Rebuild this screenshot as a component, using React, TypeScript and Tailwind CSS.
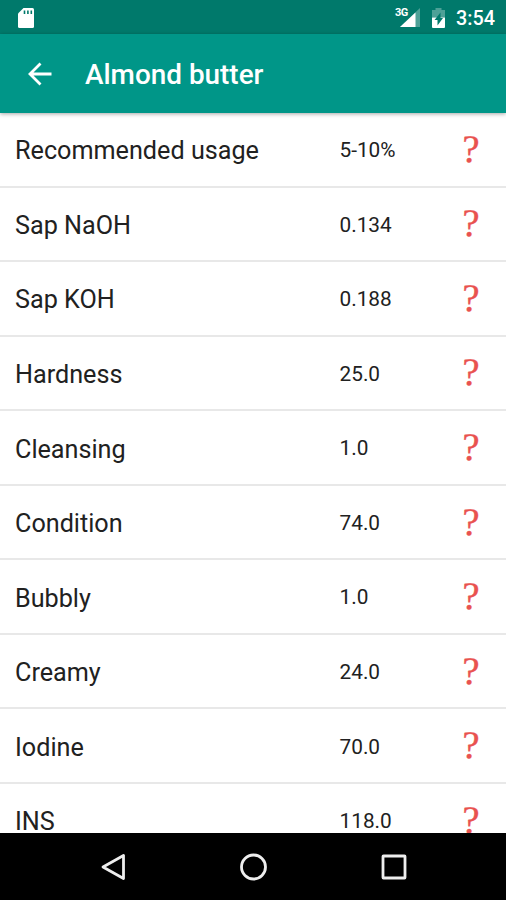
interface Property {
  label: string;
  value: string;
}

const properties: Property[] = [
  { label: 'Recommended usage', value: '5-10%' },
  { label: 'Sap NaOH', value: '0.134' },
  { label: 'Sap KOH', value: '0.188' },
  { label: 'Hardness', value: '25.0' },
  { label: 'Cleansing', value: '1.0' },
  { label: 'Condition', value: '74.0' },
  { label: 'Bubbly', value: '1.0' },
  { label: 'Creamy', value: '24.0' },
  { label: 'Iodine', value: '70.0' },
  { label: 'INS', value: '118.0' },
];

function StatusBar() {
  return (
    <div className="flex h-[34px] shrink-0 items-center bg-[#00796b] pr-[11px] pl-[17px] text-white">
      <svg className="mt-px" width="18" height="22" viewBox="0 0 18 22" aria-hidden>
        <path
          d="M6.500 1h9A1.500 1.500 0 0 1 17 2.500v17a1.500 1.500 0 0 1-1.500 1.500h-13A1.500 1.500 0 0 1 1 19.500V6.500z"
          fill="currentColor"
        />
        <path d="M7.500 3.500V7M10.900 3.500V7M14.300 3.500V7" stroke="#00796b" strokeWidth="1.600" />
      </svg>

      <div className="ml-auto flex items-center">
        <div className="relative h-[22px] w-[27px]">
          <svg className="absolute inset-0" width="27" height="22" viewBox="0 0 27 22" aria-hidden>
            <path d="M26 2v19H6z" fill="#fff" opacity="0.3" />
            <path d="M21.500 6.500V21H6z" fill="#fff" />
          </svg>
          <span className="absolute top-[2px] left-[1px] bg-[#00796b] text-[11px] leading-[9px] font-bold tracking-[-0.5px]">
            3G
          </span>
        </div>
        <svg className="ml-[10px]" width="15" height="22" viewBox="0 0 15 22" aria-hidden>
          <path d="M4.500 2h6v2H14v7.500H1V4h3.500z" fill="#fff" opacity="0.3" />
          <path d="M1 11.500h13V21a1 1 0 0 1-1 1H2a1 1 0 0 1-1-1z" fill="#fff" />
          <path d="M9.500 6.500v5.500h2.500L6.500 19.500v-5.500H3.500z" fill="#00796b" />
        </svg>
        <span className="mt-[3px] ml-[10px] text-[19.800px] leading-none font-medium">3:54</span>
      </div>
    </div>
  );
}

function AppBar() {
  return (
    <header className="relative z-10 flex h-[79px] shrink-0 items-center bg-[#009688] pl-[28px] text-white shadow-[0_1px_4px_rgba(0,0,0,0.35)]">
      <svg width="24" height="24" viewBox="0 0 24 24" fill="none" aria-hidden>
        <path d="M23.500 12H2.500M12.500 1.500 2 12l10.500 10.500" stroke="currentColor" strokeWidth="2.800" />
      </svg>
      <h1 className="mt-[3px] ml-[33px] text-[27.900px] leading-none font-medium">Almond butter</h1>
    </header>
  );
}

function PropertyRow({ label, value }: Property) {
  return (
    <li className="flex h-[74.550px] shrink-0 items-center border-b-2 border-[#e8e8e8] pl-[15px] text-[#212121]">
      <span className="w-[324.500px] pt-[4px] text-[25.200px]">{label}</span>
      <span className="w-[122.500px] pt-[3px] text-[20.800px]">{value}</span>
      <span className="-skew-x-3 pb-[2px] font-['Liberation_Serif',serif] text-[39px] leading-none text-[#e9524f] [-webkit-text-stroke:0.4px_#e9524f]">
        ?
      </span>
    </li>
  );
}

function NavigationBar() {
  return (
    <nav className="flex h-[67px] shrink-0 items-center justify-between bg-black pr-[99px] pl-[100px] text-[#eee]">
      <svg width="26" height="28" viewBox="0 0 26 28" fill="none" stroke="currentColor" strokeWidth="2.800">
        <path d="M23.500 2.500v23L3 14z" strokeLinejoin="round" />
      </svg>
      <svg width="28" height="28" viewBox="0 0 28 28" fill="none" stroke="currentColor" strokeWidth="2.800">
        <circle cx="13.500" cy="14" r="12" />
      </svg>
      <svg width="26" height="26" viewBox="0 0 26 26" fill="none" stroke="currentColor" strokeWidth="2.800">
        <rect x="2" y="2" width="22" height="22" rx="0.500" />
      </svg>
    </nav>
  );
}

export default function App() {
  return (
    <div className="flex h-[900px] w-[506px] flex-col overflow-hidden bg-white font-[Roboto,sans-serif]">
      <StatusBar />
      <AppBar />
      <ul className="flex min-h-0 flex-1 flex-col overflow-hidden">
        {properties.map((property) => (
          <PropertyRow key={property.label} {...property} />
        ))}
      </ul>
      <NavigationBar />
    </div>
  );
}
